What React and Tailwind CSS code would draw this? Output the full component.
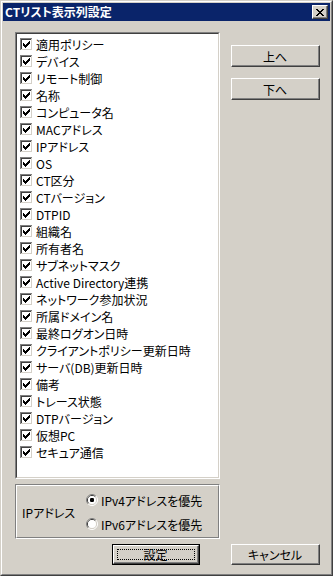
const columns = [
  "適用ポリシー",
  "デバイス",
  "リモート制御",
  "名称",
  "コンピュータ名",
  "MACアドレス",
  "IPアドレス",
  "OS",
  "CT区分",
  "CTバージョン",
  "DTPID",
  "組織名",
  "所有者名",
  "サブネットマスク",
  "Active Directory連携",
  "ネットワーク参加状況",
  "所属ドメイン名",
  "最終ログオン日時",
  "クライアントポリシー更新日時",
  "サーバ(DB)更新日時",
  "備考",
  "トレース状態",
  "DTPバージョン",
  "仮想PC",
  "セキュア通信",
];

// classic 7x7 check glyph, one 3px column per x
const checkTops = [2, 3, 4, 3, 2, 1, 0];

const CheckBox = () => (
  <svg width="13" height="13" viewBox="0 0 13 13" className="shrink-0">
    <rect x="0" y="0" width="13" height="13" fill="#ffffff" />
    <rect x="0" y="0" width="12" height="12" fill="#808080" />
    <rect x="1" y="1" width="11" height="11" fill="#d4d0c8" />
    <rect x="1" y="1" width="10" height="10" fill="#404040" />
    <rect x="2" y="2" width="9" height="9" fill="#ffffff" />
    {checkTops.map((t, i) => (
      <rect key={i} x={3 + i} y={3 + t} width="1" height="3" fill="#000000" />
    ))}
  </svg>
);

const Radio = ({ checked }) => (
  <svg width="12" height="12" viewBox="0 0 12 12" className="shrink-0">
    <path d="M2.11 9.89 A5.5 5.5 0 0 1 9.89 2.11" stroke="#808080" fill="none" />
    <path d="M9.89 2.11 A5.5 5.5 0 0 1 2.11 9.89" stroke="#ffffff" fill="none" />
    <path d="M2.82 9.18 A4.5 4.5 0 0 1 9.18 2.82" stroke="#404040" fill="none" />
    <path d="M9.18 2.82 A4.5 4.5 0 0 1 2.82 9.18" stroke="#d4d0c8" fill="none" />
    <circle cx="6" cy="6" r="4" fill="#ffffff" />
    {checked && <rect x="4" y="4" width="4" height="4" rx="1.2" fill="#000000" />}
  </svg>
);

const Button = ({ children, className = "" }) => (
  <div
    className={`flex border border-t-white border-l-white border-r-[#404040] border-b-[#404040] ${className}`}
  >
    <div className="flex flex-1 items-center justify-center border-r border-b border-r-[#808080] border-b-[#808080] pt-[1px]">
      {children}
    </div>
  </div>
);

const xPixels = [
  [0, 0], [1, 0], [6, 0], [7, 0],
  [1, 1], [2, 1], [5, 1], [6, 1],
  [2, 2], [3, 2], [4, 2], [5, 2],
  [3, 3], [4, 3],
  [2, 4], [3, 4], [4, 4], [5, 4],
  [1, 5], [2, 5], [5, 5], [6, 5],
  [0, 6], [1, 6], [6, 6], [7, 6],
];

const CloseGlyph = () => (
  <svg width="8" height="7" viewBox="0 0 8 7">
    {xPixels.map(([x, y], i) => (
      <rect key={i} x={x} y={y} width="1" height="1" fill="#000000" />
    ))}
  </svg>
);

export default function App() {
  return (
    <div
      className="w-[333px] h-[576px] bg-[#d4d0c8] text-black text-[12px] leading-[17px] [font-feature-settings:'palt']"
      style={{ fontFamily: '"Noto Sans CJK JP", "Noto Sans", sans-serif' }}
    >
      <div className="h-full border border-t-[#d4d0c8] border-l-[#d4d0c8] border-r-[#404040] border-b-[#404040]">
        <div className="h-full flex flex-col border border-t-white border-l-white border-r-[#808080] border-b-[#808080] p-[1px]">
          {/* title bar */}
          <div className="h-[18px] bg-[#0a246a] flex items-center justify-between pl-[2px] pr-[2px]">
            <span className="text-white font-bold text-[12px] leading-[18px]">
              CTリスト表示列設定
            </span>
            <Button className="w-[16px] h-[14px] bg-[#d4d0c8]">
              <CloseGlyph />
            </Button>
          </div>

          <div className="flex pl-[12px] pt-[11px]">
            {/* left column */}
            <div className="w-[205px] flex flex-col">
              <div className="h-[447px] border border-t-[#808080] border-l-[#808080] border-r-white border-b-white">
                <div className="h-full bg-white border border-t-[#404040] border-l-[#404040] border-r-[#d4d0c8] border-b-[#d4d0c8] pl-[3px] pt-[2px]">
                  {columns.map((c) => (
                    <div key={c} className="h-[17px] flex items-center gap-[3px]">
                      <CheckBox />
                      <span className="whitespace-nowrap">{c}</span>
                    </div>
                  ))}
                </div>
              </div>

              <div className="mt-[5px] h-[55px] border border-t-[#808080] border-l-[#808080] border-r-white border-b-white">
                <div className="h-full border border-t-white border-l-white border-r-[#808080] border-b-[#808080] flex items-center pl-[5px]">
                  <span className="w-[64px] whitespace-nowrap pt-[2px]">IPアドレス</span>
                  <div className="flex flex-col gap-[7px] pt-[1px]">
                    <div className="flex items-center gap-[3px]">
                      <Radio checked />
                      <span className="whitespace-nowrap">IPv4アドレスを優先</span>
                    </div>
                    <div className="flex items-center gap-[3px]">
                      <Radio />
                      <span className="whitespace-nowrap">IPv6アドレスを優先</span>
                    </div>
                  </div>
                </div>
              </div>

              <div className="mt-[5px] ml-[97px] w-[88px] h-[21px] border border-black flex">
                <Button className="flex-1 relative">
                  <span>設定</span>
                  <div className="absolute inset-[3px] border border-dotted border-black" />
                </Button>
              </div>
            </div>

            {/* right column */}
            <div className="ml-[11px] w-[89px] flex flex-col">
              <Button className="mt-[13px] h-[22px]">上へ</Button>
              <Button className="mt-[11px] h-[22px]">下へ</Button>
              <Button className="mt-auto h-[21px]">キャンセル</Button>
            </div>
          </div>
        </div>
      </div>
    </div>
  );
}
